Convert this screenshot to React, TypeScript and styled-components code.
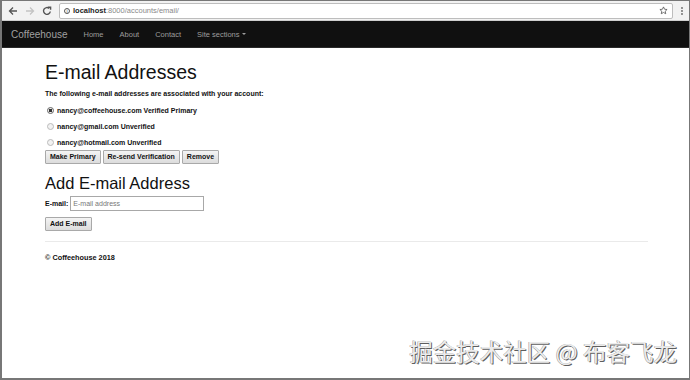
import styled, { createGlobalStyle } from 'styled-components';

const GlobalStyle = createGlobalStyle`
  html, body {
    margin: 0;
    padding: 0;
    background: #ffffff;
  }
  body {
    font-family: "Liberation Sans", Arial, sans-serif;
  }
`;

const Frame = styled.div`
  position: relative;
  width: 690px;
  height: 380px;
  box-sizing: border-box;
  border: 1px solid #777;
  border-left-width: 2px;
  border-bottom-width: 2px;
  overflow: hidden;
  display: flex;
  flex-direction: column;
  background: #fff;
`;

const Chrome = styled.div`
  height: 19px;
  background: #f2f2f2;
  border-bottom: 1px solid #cfcfcf;
  display: flex;
  align-items: center;
  padding: 0 4px 0 4px;
`;

const NavIcon = styled.div<{ $faded?: boolean }>`
  width: 14px;
  height: 14px;
  margin-right: 3px;
  display: flex;
  align-items: center;
  justify-content: center;
  color: ${p => (p.$faded ? '#c4c4c4' : '#555')};
`;

const AddressBar = styled.div`
  flex: 1;
  height: 14px;
  margin: 0 6px 0 2px;
  background: #fff;
  border: 1px solid #bdbdbd;
  border-radius: 2px;
  display: flex;
  align-items: center;
  padding: 0 4px;
  font-size: 7.5px;
  color: #8a8a8a;
`;

const Host = styled.span`
  color: #222;
  font-weight: bold;
`;

const InfoDot = styled.span`
  width: 6px;
  height: 6px;
  border: 1px solid #555;
  border-radius: 50%;
  margin-right: 3px;
  display: inline-flex;
  align-items: center;
  justify-content: center;
  font-size: 5px;
  color: #555;
  box-sizing: border-box;
`;

const Spacer = styled.div`
  flex: 1;
`;

const Navbar = styled.nav`
  height: 26px;
  background: #101010;
  border-bottom: 1px solid #2a2a2a;
  display: flex;
  align-items: center;
  padding-left: 9px;
`;

const Brand = styled.div`
  font-size: 10px;
  color: #a0a0a0;
  margin-right: 16px;
`;

const NavLink = styled.div`
  font-size: 7.5px;
  color: #9d9d9d;
  margin-right: 16px;
  display: flex;
  align-items: center;
`;

const Caret = styled.span`
  display: inline-block;
  margin-left: 2px;
  width: 0;
  height: 0;
  border-left: 2px solid transparent;
  border-right: 2px solid transparent;
  border-top: 2px solid #9d9d9d;
`;

const Content = styled.main`
  padding: 0 40px 0 43px;
  display: flex;
  flex-direction: column;
  color: #111;
`;

const Title = styled.h1`
  margin: 13px 0 0 0;
  font-size: 19.5px;
  line-height: 22px;
  font-weight: normal;
`;

const SubTitle = styled.h2`
  margin: 10px 0 0 0;
  font-size: 16.5px;
  line-height: 19px;
  font-weight: normal;
`;

const Lead = styled.p`
  margin: 6px 0 3px 0;
  font-size: 7px;
  font-weight: bold;
  line-height: 10px;
`;

const RadioRow = styled.label`
  display: flex;
  align-items: center;
  height: 16px;
  font-size: 7px;
  font-weight: bold;
`;

const Radio = styled.span<{ $checked?: boolean }>`
  width: 5px;
  height: 5px;
  border-radius: 50%;
  border: 1px solid ${p => (p.$checked ? '#666' : '#bbb')};
  background: ${p => (p.$checked ? 'radial-gradient(circle, #333 0 40%, #eee 50%)' : '#f2f2f2')};
  margin: 0 3px 0 2px;
`;

const ButtonRow = styled.div`
  display: flex;
  gap: 2px;
`;

const Button = styled.button`
  height: 14px;
  padding: 0 4px;
  font-family: "Liberation Sans", Arial, sans-serif;
  font-size: 7px;
  font-weight: bold;
  color: #111;
  background: linear-gradient(#f4f4f4, #dcdcdc);
  border: 1px solid #a9a9a9;
  border-radius: 1px;
  line-height: 12px;
`;

const FormRow = styled.div`
  display: flex;
  align-items: center;
  margin-top: 3px;
  height: 15px;
  font-size: 7px;
  font-weight: bold;
  gap: 2px;
`;

const Input = styled.div`
  width: 130px;
  height: 13px;
  border: 1px solid #a8a8a8;
  display: flex;
  align-items: center;
  padding-left: 2px;
  font-size: 7px;
  font-weight: normal;
  color: #777;
`;

const SubmitRow = styled.div`
  margin-top: 6px;
  display: flex;
`;

const Rule = styled.hr`
  margin: 10px 0 0 0;
  border: none;
  border-top: 1px solid #eaeaea;
  width: 603px;
`;

const Footer = styled.footer`
  margin-top: 11px;
  font-size: 7.3px;
  font-weight: bold;
`;

const Watermark = styled.div`
  position: absolute;
  right: 12px;
  bottom: 10px;
  font-family: "Noto Sans CJK SC", sans-serif;
  font-size: 23.5px;
  color: #ececec;
  text-shadow: 1px 1px 0 #5e5e5e, -0.5px -0.5px 0 #9a9a9a;
`;

const Back = () => (
  <svg width="10" height="10" viewBox="0 0 10 10" fill="none" stroke="currentColor" strokeWidth="1.3">
    <path d="M9 5H1.5M5 1.5L1.5 5L5 8.5" />
  </svg>
);

const Forward = () => (
  <svg width="10" height="10" viewBox="0 0 10 10" fill="none" stroke="currentColor" strokeWidth="1.3">
    <path d="M1 5h7.5M5 1.5L8.5 5L5 8.5" />
  </svg>
);

const Reload = () => (
  <svg width="10" height="10" viewBox="0 0 10 10" fill="none" stroke="currentColor" strokeWidth="1.4">
    <path d="M8.3 5.5A3.4 3.4 0 1 1 7.2 2.4" />
    <path d="M6 1.2h2.6v2.6" />
  </svg>
);

const Star = () => (
  <svg width="9" height="9" viewBox="0 0 10 10" fill="none" stroke="#555" strokeWidth="0.9">
    <path d="M5 1l1.2 2.6 2.8.3-2.1 1.9.6 2.8L5 7.2 2.5 8.6l.6-2.8L1 3.9l2.8-.3z" />
  </svg>
);

const Dots = () => (
  <svg width="6" height="10" viewBox="0 0 6 10" fill="#666">
    <circle cx="3" cy="2" r="0.9" />
    <circle cx="3" cy="5" r="0.9" />
    <circle cx="3" cy="8" r="0.9" />
  </svg>
);

const emails = [
  { address: 'nancy@coffeehouse.com', status: 'Verified Primary', checked: true },
  { address: 'nancy@gmail.com', status: 'Unverified', checked: false },
  { address: 'nancy@hotmail.com', status: 'Unverified', checked: false },
];

export default function App() {
  return (
    <>
      <GlobalStyle />
      <Frame>
        <Chrome>
          <NavIcon><Back /></NavIcon>
          <NavIcon $faded><Forward /></NavIcon>
          <NavIcon><Reload /></NavIcon>
          <AddressBar>
            <InfoDot>i</InfoDot>
            <Host>localhost</Host>:8000/accounts/email/
            <Spacer />
            <Star />
          </AddressBar>
          <Dots />
        </Chrome>
        <Navbar>
          <Brand>Coffeehouse</Brand>
          <NavLink>Home</NavLink>
          <NavLink>About</NavLink>
          <NavLink>Contact</NavLink>
          <NavLink>Site sections<Caret /></NavLink>
        </Navbar>
        <Content>
          <Title>E-mail Addresses</Title>
          <Lead>The following e-mail addresses are associated with your account:</Lead>
          {emails.map(e => (
            <RadioRow key={e.address}>
              <Radio $checked={e.checked} />
              {e.address} {e.status}
            </RadioRow>
          ))}
          <ButtonRow>
            <Button>Make Primary</Button>
            <Button>Re-send Verification</Button>
            <Button>Remove</Button>
          </ButtonRow>
          <SubTitle>Add E-mail Address</SubTitle>
          <FormRow>
            E-mail:
            <Input>E-mail address</Input>
          </FormRow>
          <SubmitRow>
            <Button>Add E-mail</Button>
          </SubmitRow>
          <Rule />
          <Footer>© Coffeehouse 2018</Footer>
        </Content>
        <Watermark>掘金技术社区 @ 布客飞龙</Watermark>
      </Frame>
    </>
  );
}
